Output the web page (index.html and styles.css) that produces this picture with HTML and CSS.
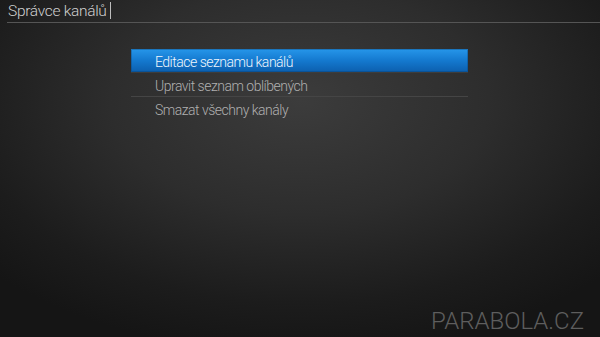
FILE: index.html
```html
<!DOCTYPE html>
<html lang="cs">
<head>
<meta charset="utf-8">
<title>Správce kanálů</title>
<link rel="stylesheet" href="styles.css">
</head>
<body>
<div class="screen">
  <header class="header">
    <span class="title">Správce kanálů</span><span class="cursor"></span>
  </header>
  <ul class="menu">
    <li class="item selected">Editace seznamu kanálů</li>
    <li class="item">Upravit seznam oblíbených</li>
    <li class="item last">Smazat všechny kanály</li>
  </ul>
  <div class="brand">PARABOLA.CZ</div>
</div>
</body>
</html>
```
FILE: styles.css
```css
html, body {
  margin: 0;
  padding: 0;
}
body {
  width: 600px;
  height: 337px;
  overflow: hidden;
  background: #1a1a1a;
  font-family: Roboto, "Liberation Sans", sans-serif;
}
.screen {
  width: 600px;
  height: 337px;
  display: flex;
  flex-direction: column;
  box-sizing: border-box;
  background: radial-gradient(ellipse 70% 75% at 50% 30%, #3c3c3c 0%, #2d2d2d 45%, #1c1c1c 80%, #151515 100%);
}
.header {
  margin-left: 7px;
  height: 22px;
  border-bottom: 1px solid #555;
  display: flex;
  align-items: flex-start;
  padding-left: 1px;
}
.title {
  margin-top: 1px;
  font-size: 15.5px;
  line-height: 20px;
  font-weight: 300;
  letter-spacing: -0.3px;
  color: #d0d0d0;
}
.cursor {
  width: 1px;
  height: 17px;
  margin-top: 2px;
  margin-left: 3px;
  background: #bdbdbd;
}
.menu {
  list-style: none;
  margin: 26px 0 0 131px;
  padding: 0;
  width: 337px;
}
.item {
  height: 21px;
  padding-top: 2px;
  line-height: 22px;
  padding-left: 24px;
  font-size: 14px;
  font-weight: 300;
  letter-spacing: -0.5px;
  color: #b0b0b0;
  border-bottom: 1px solid #454545;
}
.item.last {
  border-bottom: none;
}
.item.selected {
  color: #f0f6fc;
  background: linear-gradient(to bottom, #2696ea 0%, #1479cf 50%, #0c5fae 100%);
  border-bottom: 1px solid #3d3d3d;
  box-shadow: inset 0 0 0 1px rgba(10, 60, 110, 0.35);
}
.brand {
  margin-top: auto;
  align-self: flex-end;
  padding: 0 16px 3px 0;
  font-size: 24px;
  line-height: 25px;
  font-weight: 300;
  color: #5e5e5e;
}
```
